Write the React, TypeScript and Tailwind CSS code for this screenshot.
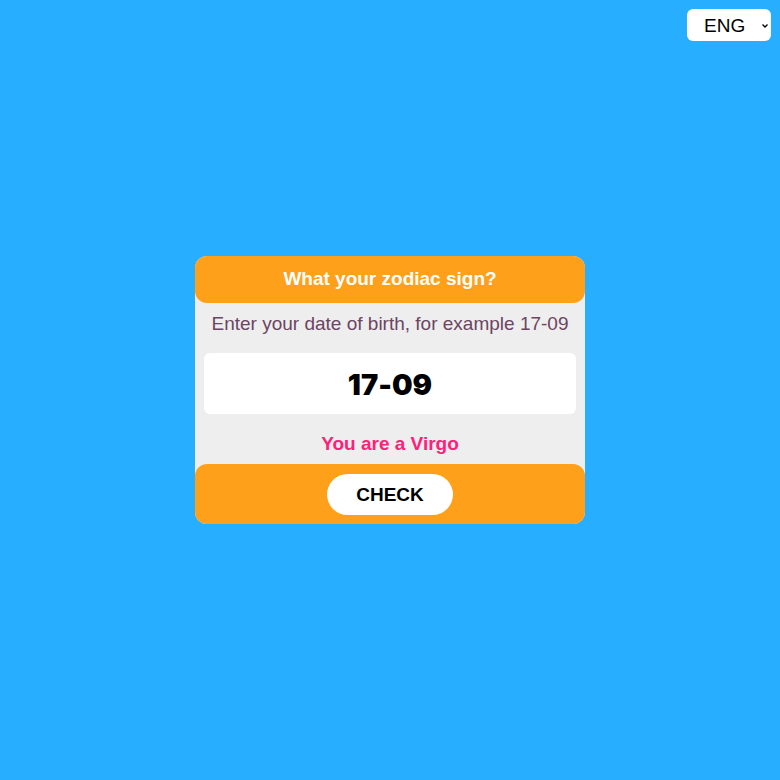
import { useState } from "react";
import type { FormEvent } from "react";

const signs: [number, string][] = [
  [120, "a Capricorn"],
  [219, "an Aquarius"],
  [321, "a Pisces"],
  [420, "an Aries"],
  [521, "a Taurus"],
  [621, "a Gemini"],
  [723, "a Cancer"],
  [823, "a Leo"],
  [923, "a Virgo"],
  [1023, "a Libra"],
  [1122, "a Scorpio"],
  [1222, "a Sagittarius"],
  [1231, "a Capricorn"],
];

function findSign(date: string) {
  const [day, month] = date.split("-").map(Number);
  const found = signs.find(([end]) => month * 100 + day < end);
  return found ? `You are ${found[1]}` : "You are a Capricorn";
}

export default function App() {
  const [date, setDate] = useState("17-09");
  const [result, setResult] = useState(findSign("17-09"));

  function check(event: FormEvent) {
    event.preventDefault();
    setResult(findSign(date));
  }

  return (
    <div className="relative grid min-h-screen place-items-center bg-[#27aeff] font-['Liberation_Sans',Arial,sans-serif] text-[19px] leading-[22px]">
      <div className="absolute top-[9px] right-[9px]">
        <select
          aria-label="Language"
          className="block h-8 w-[84px] appearance-none rounded-[6px] bg-white pt-0.5 pl-[17px] text-black"
        >
          <option>ENG</option>
          <option>RUS</option>
        </select>
        <svg
          viewBox="0 0 6 4"
          className="pointer-events-none absolute top-[15px] right-[3px] h-1 w-1.5"
          fill="none"
          stroke="black"
          strokeWidth="1.3"
          aria-hidden="true"
        >
          <path d="M.5.5 3 3 5.5.5" />
        </svg>
      </div>
      <form
        onSubmit={check}
        className="w-1/2 min-w-[380px] rounded-[12px] bg-[#eeeeee] text-center"
      >
        <h1 className="rounded-[12px] bg-[#ffa01a] pt-3 pb-[13px] font-bold text-white">
          What your zodiac sign?
        </h1>
        <div className="px-[9px] pt-2.5 pb-[9px]">
          <label htmlFor="birth" className="block text-[#6b4562]">
            Enter your date of birth, for example 17-09
          </label>
          <input
            id="birth"
            value={date}
            onChange={(event) => setDate(event.target.value)}
            className="mt-[18px] mb-[19px] block h-[61px] w-full rounded-[6px] bg-white pt-0.5 text-center font-['Arial_Black',Inter,sans-serif] text-[29px] font-black text-black [font-feature-settings:'calt'_0]"
          />
          <output className="block font-bold text-[#ff2079]">{result}</output>
        </div>
        <div className="rounded-[12px] bg-[#ffa01a] pt-2.5 pb-[9px]">
          <button
            type="submit"
            className="h-[41px] rounded-full bg-white px-[29px] font-bold text-black"
          >
            CHECK
          </button>
        </div>
      </form>
    </div>
  );
}
